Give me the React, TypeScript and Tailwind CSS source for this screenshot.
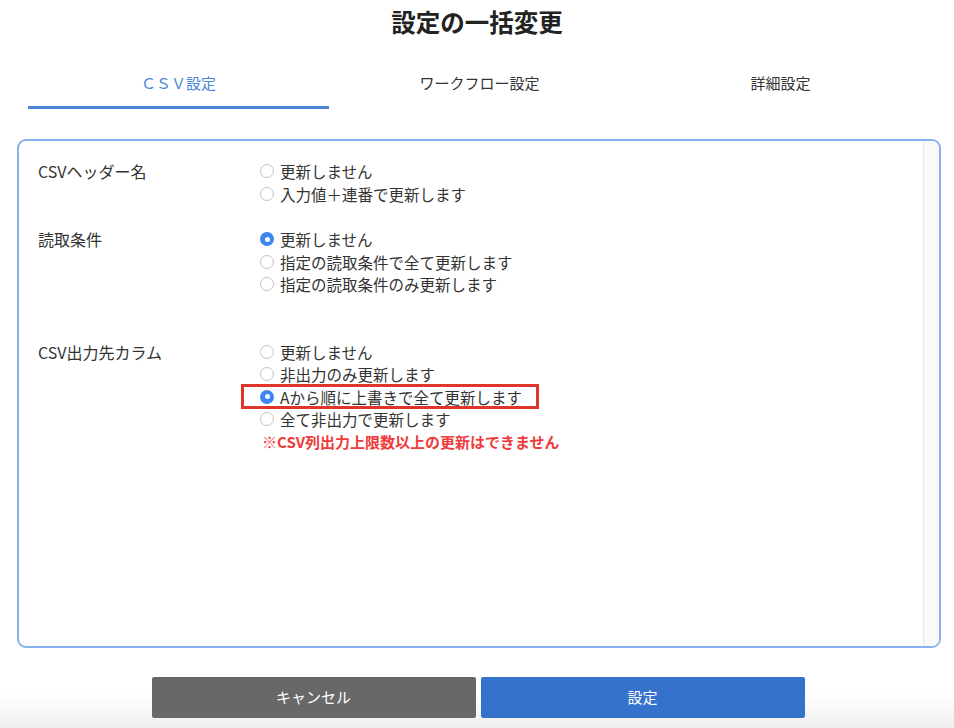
import React from "react";

type Opt = { label: string; checked?: boolean; highlight?: boolean };
type Group = { title: string; options: Opt[]; note?: string; mt: string };

const groups: Group[] = [
  {
    title: "CSVヘッダー名",
    options: [{ label: "更新しません" }, { label: "入力値＋連番で更新します" }],
    mt: "mt-0",
  },
  {
    title: "読取条件",
    options: [
      { label: "更新しません", checked: true },
      { label: "指定の読取条件で全て更新します" },
      { label: "指定の読取条件のみ更新します" },
    ],
    mt: "mt-[23px]",
  },
  {
    title: "CSV出力先カラム",
    options: [
      { label: "更新しません" },
      { label: "非出力のみ更新します" },
      { label: "Aから順に上書きで全て更新します", checked: true, highlight: true },
      { label: "全て非出力で更新します" },
    ],
    note: "※CSV列出力上限数以上の更新はできません",
    mt: "mt-[45px]",
  },
];

function Radio({ checked }: { checked?: boolean }) {
  if (checked) {
    return (
      <span className="flex h-[14px] w-[14px] shrink-0 items-center justify-center rounded-full bg-[#3d86f2]">
        <span className="h-[5px] w-[5px] rounded-full bg-white" />
      </span>
    );
  }
  return (
    <span className="h-[14px] w-[14px] shrink-0 rounded-full border border-[#c4c4c4] bg-white" />
  );
}

export default function App() {
  const font = { fontFamily: '"Noto Sans CJK JP", "Noto Sans", sans-serif' };
  return (
    <div className="flex h-[728px] w-[954px] flex-col bg-white text-[#333]" style={font}>
      <div className="flex h-[44px] items-center justify-center text-[24.5px] font-bold text-[#222]">
        設定の一括変更
      </div>
      <div className="mt-[20px] ml-[28px] flex w-[903px]">
        <div className="flex-1 border-b-[3px] border-[#4a86d8] pt-[8px] pb-[12px] text-center text-[15px] leading-[22px] text-[#4a86d8]">
          ＣＳＶ設定
        </div>
        <div className="flex-1 border-b-[3px] border-transparent pt-[8px] pb-[12px] text-center text-[15px] leading-[22px] text-[#333]">
          ワークフロー設定
        </div>
        <div className="flex-1 border-b-[3px] border-transparent pt-[8px] pb-[12px] text-center text-[15px] leading-[22px] text-[#333]">
          詳細設定
        </div>
      </div>
      <div className="mt-[30px] ml-[17px] flex h-[509px] w-[924px] overflow-hidden rounded-[9px] border-2 border-[#86b2f0]">
        <div className="flex-1 pt-[19px] pl-[19px]">
          {groups.map((g) => (
            <div key={g.title} className={`flex ${g.mt}`}>
              <div className="w-[222px] shrink-0 text-[16px] leading-[22.5px]">{g.title}</div>
              <div className="flex flex-col">
                {g.options.map((o) => (
                  <div key={o.label} className="relative flex h-[22.5px] items-center gap-[6px]">
                    <Radio checked={o.checked} />
                    <span className="text-[15.5px] leading-[22.5px]">{o.label}</span>
                    {o.highlight && (
                      <span className="absolute left-[-19px] top-[-2px] h-[25px] w-[298px] border-[3px] border-[#e0352b]" />
                    )}
                  </div>
                ))}
                {g.note && (
                  <div className="ml-[2px] text-[15px] font-bold leading-[22px] text-[#ee3b3b]">{g.note}</div>
                )}
              </div>
            </div>
          ))}
        </div>
        <div className="w-[16px] shrink-0 border-l border-[#e9e9e9] bg-[#f9f9f9]" />
      </div>
      <div className="mt-[12px] flex flex-1 justify-center bg-gradient-to-b from-white via-white to-[#efefef] pt-[17px] pl-[2px]">
        <div className="flex h-[41px] gap-[5px]">
          <button className="w-[324px] rounded-[2px] bg-[#696767] text-[15px] text-white">キャンセル</button>
          <button className="w-[324px] rounded-[2px] bg-[#3572cc] text-[15px] text-white">設定</button>
        </div>
      </div>
    </div>
  );
}
